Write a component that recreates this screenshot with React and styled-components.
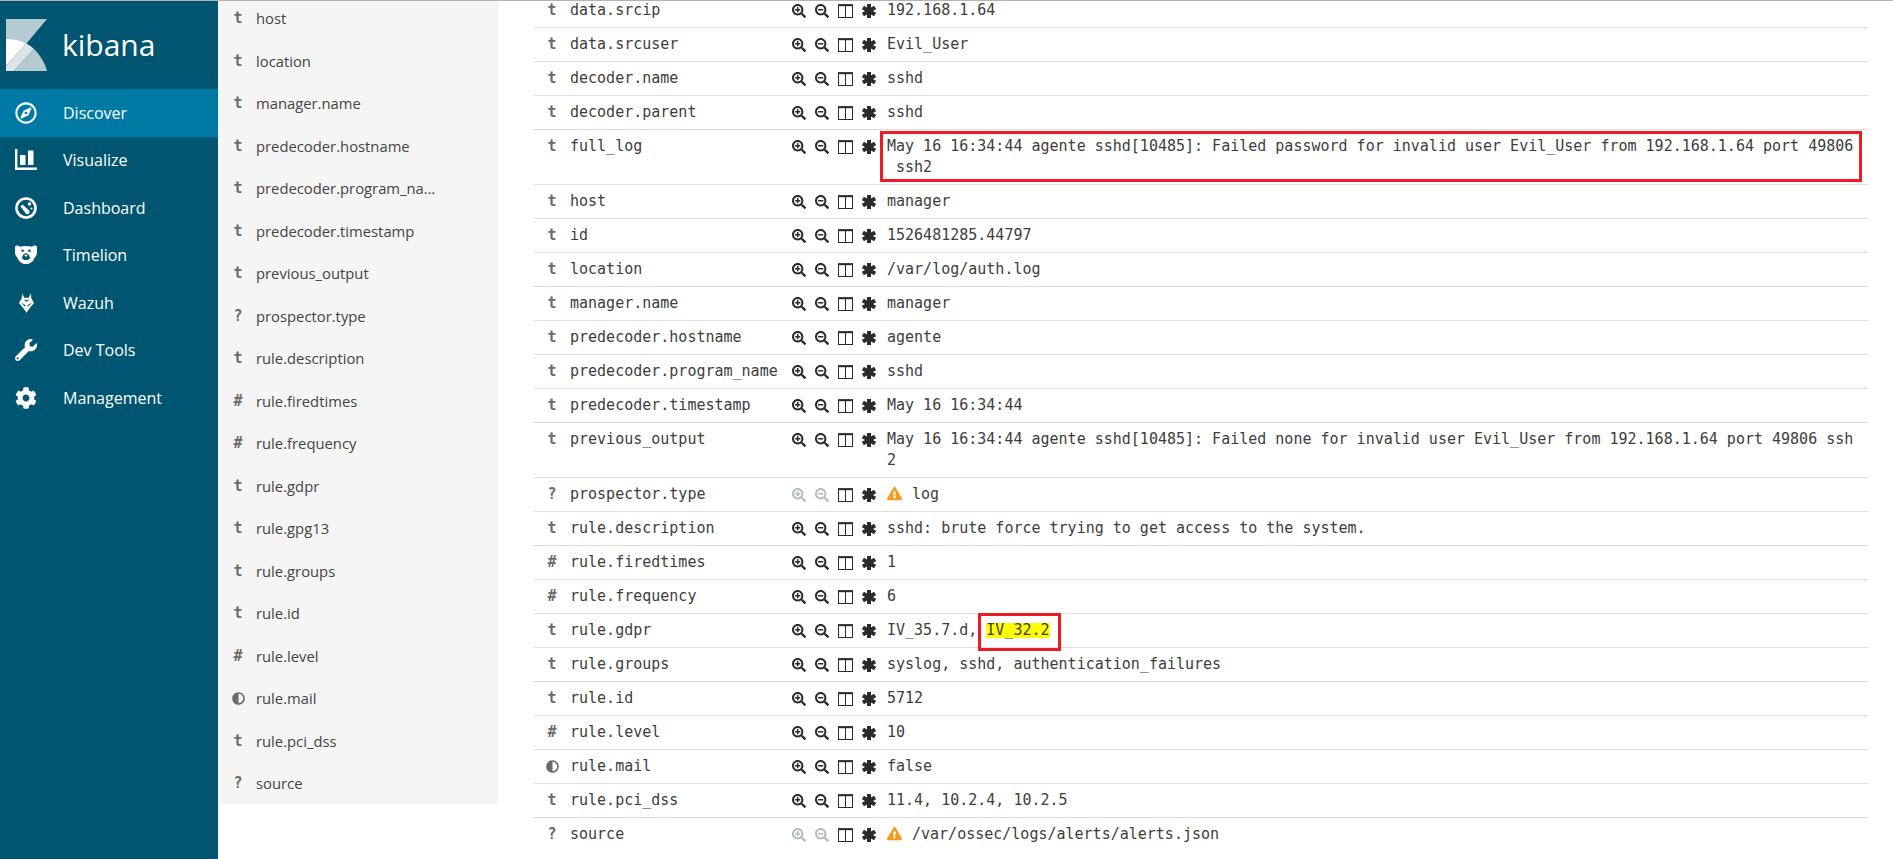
import React from 'react';
import styled, { createGlobalStyle } from 'styled-components';
import { FaRegCompass, FaWrench, FaCog, FaSearchPlus, FaSearchMinus, FaExclamationTriangle, FaAdjust } from 'react-icons/fa';

const GlobalStyle = createGlobalStyle`
  html, body { margin: 0; padding: 0; background: #fff; }
`;

const Page = styled.div`
  display: flex;
  height: 859px;
  overflow: hidden;
  box-sizing: border-box;
  border-top: 1px solid #b4b4b4;
  font-family: "Open Sans", sans-serif;
`;

const Sidebar = styled.nav`
  flex: 0 0 218px;
  background: #005571;
  color: #fff;
`;

const Brand = styled.div`
  display: flex;
  align-items: flex-start;
  height: 88px;
  padding: 18px 0 0 6px;
  box-sizing: border-box;
`;

const BrandName = styled.span`
  margin: 6px 0 0 15px;
  font-size: 30px;
  line-height: 40px;
`;

const NavItem = styled.a`
  display: flex;
  align-items: center;
  height: 47.5px;
  padding-left: 15px;
  box-sizing: border-box;
  font-size: 16px;
  background: ${p => (p.$active ? '#0079a5' : 'transparent')};
`;

const NavIcon = styled.span`
  display: flex;
  align-items: center;
  justify-content: center;
  flex: 0 0 22px;
  height: 22px;
  margin-right: 26px;
  font-size: 22px;
`;

const FieldList = styled.aside`
  flex: 0 0 280px;
  align-self: flex-start;
  height: 807px;
  margin-top: -4px;
  background: #f5f5f5;
  color: #444;
`;

const FieldItem = styled.div`
  display: flex;
  align-items: center;
  height: 42.5px;
  font-size: 14.8px;
`;

const TypeIcon = styled.span`
  display: flex;
  align-items: center;
  justify-content: center;
  align-self: start;
  flex: 0 0 ${p => p.$width}px;
  height: ${p => p.$height}px;
  margin-left: ${p => p.$offset}px;
  font-family: "DejaVu Sans Mono", monospace;
  font-weight: 700;
  font-size: 15px;
  color: #6b6b6b;
`;

const FieldName = styled.span`
  width: 184px;
  margin-left: 9px;
  overflow: hidden;
  white-space: nowrap;
  text-overflow: ellipsis;
`;

const Main = styled.main`
  flex: 1;
  min-width: 0;
  padding: 0 25px 0 36px;
  margin-top: -7px;
  font-family: "DejaVu Sans Mono", monospace;
  font-size: 15px;
  line-height: 21px;
  color: #3d3d3d;
`;

const Row = styled.div`
  display: grid;
  grid-template-columns: 36px 222px 95px 1fr;
  padding: 6px 0;
  border-bottom: 1px solid #dddddd;
  &:last-child { border-bottom: 0; }
`;

const Actions = styled.div`
  display: flex;
  align-items: center;
  gap: 9px;
  height: 21px;
  color: #2b2b2b;
`;

const Action = styled.span`
  display: flex;
  font-size: 14px;
  color: ${p => (p.$disabled ? '#b4bcbc' : 'inherit')};
`;

const Value = styled.div`
  position: relative;
  white-space: pre-wrap;
`;

const Warning = styled(FaExclamationTriangle)`
  margin-right: 10px;
  font-size: 15px;
  color: #f39c1f;
  vertical-align: -2px;
`;

const Callout = styled.span`
  position: absolute;
  top: ${p => p.$top}px;
  right: ${p => p.$right}px;
  bottom: ${p => p.$bottom}px;
  left: ${p => p.$left}px;
  border: 3px solid #ed1c24;
  pointer-events: none;
`;

const Marked = styled.span`
  position: relative;
  display: inline-block;
  height: 15px;
  line-height: 15px;
  background: #ffff00;
`;

const Logo = () => (
  <svg width="41" height="52" viewBox="0 0 41 52">
    <path d="M0 0H41L20.5 24.5C15 21.5 7 20 0 20Z" fill="#b5cbd2" />
    <path d="M0 20C8 20 14 21 20.5 24.5L0 47Z" fill="#fff" />
    <path d="M0 47L20.5 24.5C23 26 26 28 28 30L8 52H0Z" fill="#dbe5e8" />
    <path d="M8 52L28 30C34 36 39 44 41 52Z" fill="#b5cbd2" />
  </svg>
);

const BarsIcon = () => (
  <svg width="22" height="22" viewBox="0 0 22 22" fill="#fff">
    <path d="M0 0H2.4V18.4H22V21H0Z" />
    <rect x="5" y="6" width="5.5" height="10" />
    <rect x="13" y="1.5" width="5.5" height="14.5" />
  </svg>
);

const GaugeIcon = () => (
  <svg width="22" height="22" viewBox="0 0 22 22">
    <circle cx="11" cy="11" r="9.5" fill="none" stroke="#fff" strokeWidth="2.6" />
    <circle cx="14.5" cy="7" r="1.7" fill="#fff" />
    <circle cx="16.5" cy="11.5" r="1.1" fill="#fff" />
    <path d="M5.5 9.5L7.5 7.5L13 12.5A2.4 2.4 0 1 1 9.8 15Z" fill="#fff" />
  </svg>
);

const BearIcon = () => (
  <svg width="22" height="20" viewBox="0 0 22 20">
    <path d="M0 1.5C1.5.3 3.5.3 5 1.7C8 .8 14 .8 17 1.7C18.5.3 20.5.3 22 1.5V7.5C22 10 20.5 11.5 19.5 13C18 17 14.5 19 11 19C7.5 19 4 17 2.5 13C1.5 11.5 0 10 0 7.5Z" fill="#fff" />
    <circle cx="7.6" cy="5.8" r="1.3" fill="#005571" />
    <circle cx="14.4" cy="5.8" r="1.3" fill="#005571" />
    <path d="M11 8.2C13.2 8.2 14.8 10.6 14.8 13C14.8 14.4 13 15 11 15C9 15 7.2 14.4 7.2 13C7.2 10.6 8.8 8.2 11 8.2Z" fill="#005571" />
    <path d="M9 9.8H13L11 12Z" fill="#fff" />
  </svg>
);

const WazuhIcon = () => (
  <svg width="15" height="22" viewBox="0 0 17 22">
    <path d="M3.5 0L6 5H11L13.5 0L14 6L17 11L12 17L8.5 22L5 17L0 11L3 6Z" fill="#fff" />
    <path d="M2.5 10.5L7.5 13.5L6.5 15Z" fill="#005571" />
    <path d="M14.5 10.5L9.5 13.5L10.5 15Z" fill="#005571" />
    <path d="M5 7L8.5 10L12 7L8.5 8Z" fill="#005571" />
  </svg>
);

const ColumnsIcon = () => (
  <svg width="15" height="14" viewBox="0 0 15 14" fill="none" stroke="#2b2b2b">
    <rect x=".5" y="1" width="14" height="12.5" />
    <path d="M0 1.2H15" strokeWidth="2" />
    <path d="M7.5 1V14" />
  </svg>
);

const StarIcon = () => (
  <svg width="14" height="14" viewBox="0 0 14 14" stroke="#2b2b2b" strokeWidth="4">
    <path d="M7 0V14" />
    <path d="M.9 3.5L13.1 10.5" />
    <path d="M13.1 3.5L.9 10.5" />
  </svg>
);

const navItems = [
  { label: 'Discover', icon: <FaRegCompass />, active: true },
  { label: 'Visualize', icon: <BarsIcon /> },
  { label: 'Dashboard', icon: <GaugeIcon /> },
  { label: 'Timelion', icon: <BearIcon /> },
  { label: 'Wazuh', icon: <WazuhIcon /> },
  { label: 'Dev Tools', icon: <FaWrench /> },
  { label: 'Management', icon: <FaCog /> },
];

const fields = [
  ['t', 'host'], ['t', 'location'], ['t', 'manager.name'], ['t', 'predecoder.hostname'],
  ['t', 'predecoder.program_name'], ['t', 'predecoder.timestamp'], ['t', 'previous_output'],
  ['?', 'prospector.type'], ['t', 'rule.description'], ['#', 'rule.firedtimes'],
  ['#', 'rule.frequency'], ['t', 'rule.gdpr'], ['t', 'rule.gpg13'], ['t', 'rule.groups'],
  ['t', 'rule.id'], ['#', 'rule.level'], ['b', 'rule.mail'], ['t', 'rule.pci_dss'], ['?', 'source'],
];

const rows = [
  { type: 't', name: 'data.srcip', value: '192.168.1.64' },
  { type: 't', name: 'data.srcuser', value: 'Evil_User' },
  { type: 't', name: 'decoder.name', value: 'sshd' },
  { type: 't', name: 'decoder.parent', value: 'sshd' },
  { type: 't', name: 'full_log', boxed: true, value: 'May 16 16:34:44 agente sshd[10485]: Failed password for invalid user Evil_User from 192.168.1.64 port 49806\n ssh2' },
  { type: 't', name: 'host', value: 'manager' },
  { type: 't', name: 'id', value: '1526481285.44797' },
  { type: 't', name: 'location', value: '/var/log/auth.log' },
  { type: 't', name: 'manager.name', value: 'manager' },
  { type: 't', name: 'predecoder.hostname', value: 'agente' },
  { type: 't', name: 'predecoder.program_name', value: 'sshd' },
  { type: 't', name: 'predecoder.timestamp', value: 'May 16 16:34:44' },
  { type: 't', name: 'previous_output', value: 'May 16 16:34:44 agente sshd[10485]: Failed none for invalid user Evil_User from 192.168.1.64 port 49806 ssh\n2' },
  { type: '?', name: 'prospector.type', warn: true, value: 'log' },
  { type: 't', name: 'rule.description', value: 'sshd: brute force trying to get access to the system.' },
  { type: '#', name: 'rule.firedtimes', value: '1' },
  { type: '#', name: 'rule.frequency', value: '6' },
  { type: 't', name: 'rule.gdpr', value: 'IV_35.7.d, ', marked: 'IV_32.2' },
  { type: 't', name: 'rule.groups', value: 'syslog, sshd, authentication_failures' },
  { type: 't', name: 'rule.id', value: '5712' },
  { type: '#', name: 'rule.level', value: '10' },
  { type: 'b', name: 'rule.mail', value: 'false' },
  { type: 't', name: 'rule.pci_dss', value: '11.4, 10.2.4, 10.2.5' },
  { type: '?', name: 'source', warn: true, value: '/var/ossec/logs/alerts/alerts.json' },
];

const typeGlyph = type => (type === 'b' ? <FaAdjust size={13} /> : type);

export default function App() {
  return (
    <>
      <GlobalStyle />
      <Page>
        <Sidebar>
          <Brand>
            <Logo />
            <BrandName>kibana</BrandName>
          </Brand>
          {navItems.map(item => (
            <NavItem key={item.label} $active={item.active}>
              <NavIcon>{item.icon}</NavIcon>
              {item.label}
            </NavItem>
          ))}
        </Sidebar>

        <FieldList>
          {fields.map(([type, name]) => (
            <FieldItem key={name}>
              <TypeIcon $width={18} $height={42} $offset={11}>{typeGlyph(type)}</TypeIcon>
              <FieldName>{name}</FieldName>
            </FieldItem>
          ))}
        </FieldList>

        <Main>
          {rows.map(row => (
            <Row key={row.name}>
              <TypeIcon $width={25} $height={21} $offset={0}>{typeGlyph(row.type)}</TypeIcon>
              <div>{row.name}</div>
              <Actions>
                <Action $disabled={row.warn}><FaSearchPlus /></Action>
                <Action $disabled={row.warn}><FaSearchMinus /></Action>
                <Action><ColumnsIcon /></Action>
                <Action><StarIcon /></Action>
              </Actions>
              <Value>
                {row.warn && <Warning />}
                {row.value}
                {row.marked && (
                  <Marked>
                    {row.marked}
                    <Callout $top={-10} $right={-11} $bottom={-13} $left={-8} />
                  </Marked>
                )}
                {row.boxed && <Callout $top={-5} $right={6} $bottom={-4} $left={-7} />}
              </Value>
            </Row>
          ))}
        </Main>
      </Page>
    </>
  );
}
